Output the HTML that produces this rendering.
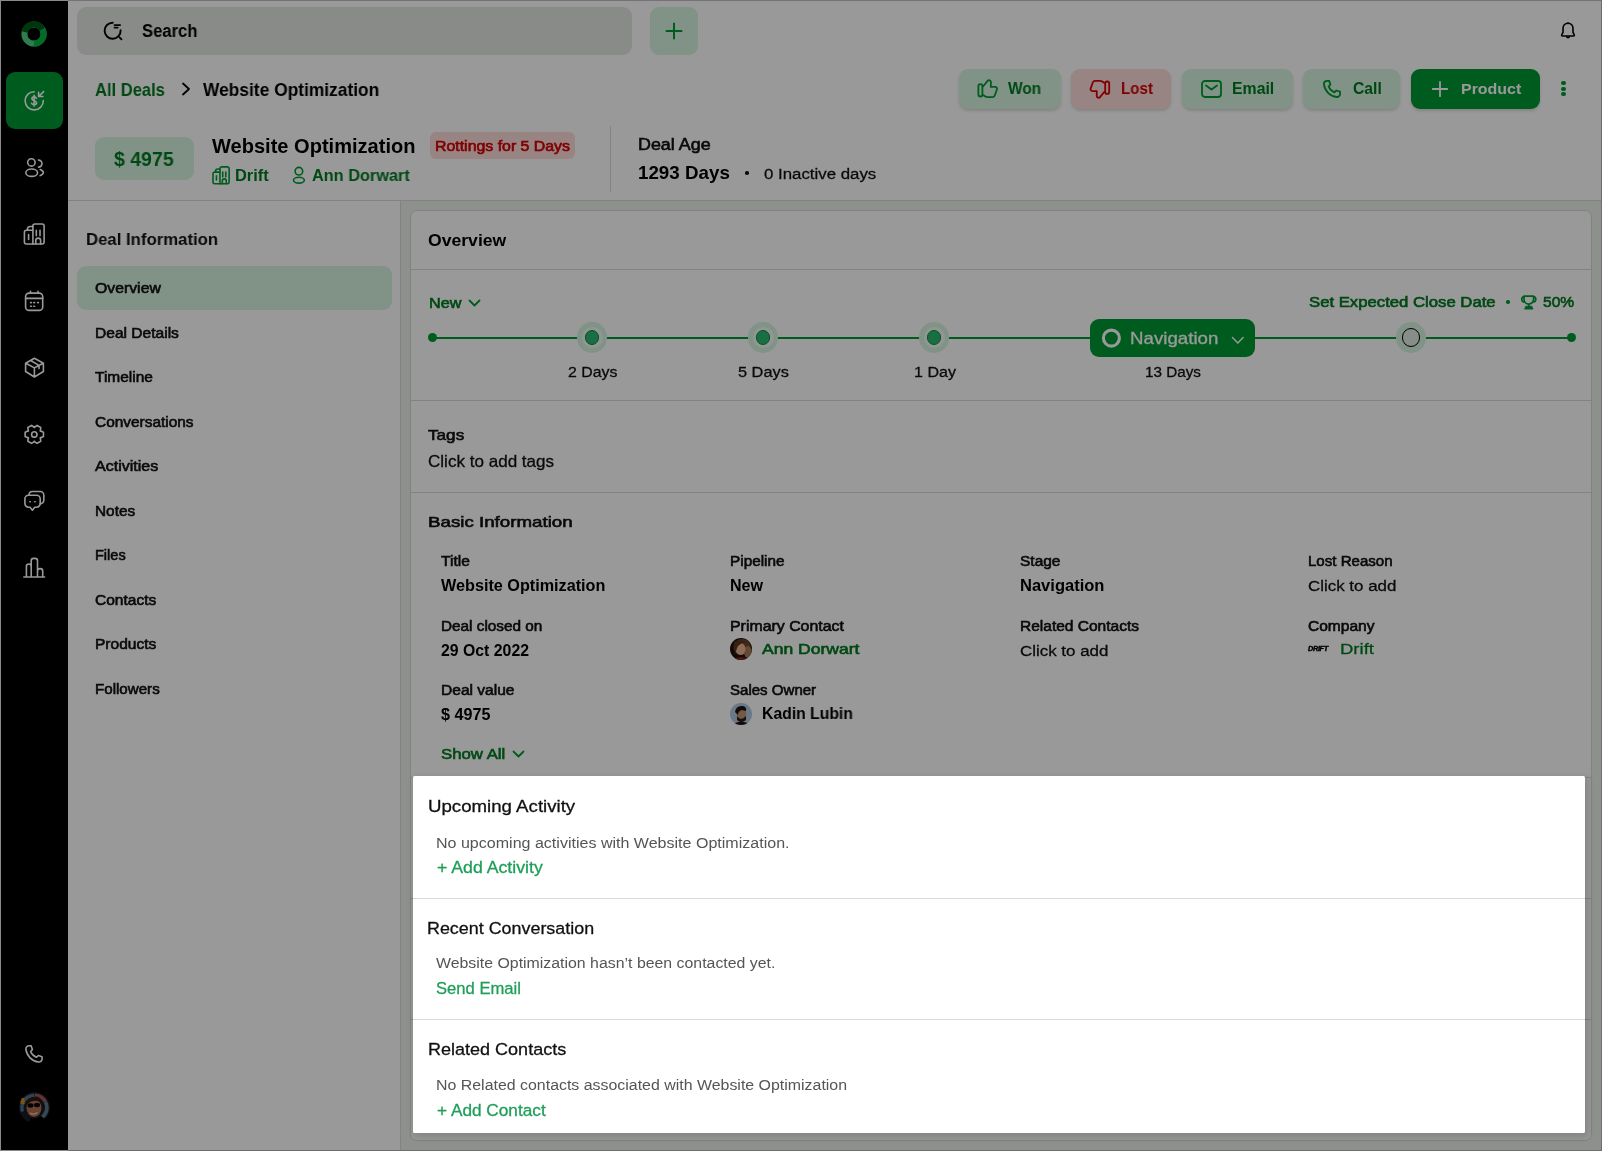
<!DOCTYPE html><html><head><meta charset="utf-8"><style>
*{margin:0;padding:0;box-sizing:border-box}
html,body{width:1602px;height:1151px;overflow:hidden}
body{position:relative;background:#edf0ed;font-family:"Liberation Sans",sans-serif}
.t{position:absolute;white-space:nowrap;line-height:1;transform-origin:0 0;will-change:transform}
.b{position:absolute}
svg{position:absolute;overflow:visible}
</style></head><body><div class="b" style="left:0;top:0;width:68px;height:1151px;background:#000"></div>
<div class="b" style="left:68px;top:0;width:1534px;height:201px;background:#fff;border-bottom:1px solid #d9d9d9"></div>
<div class="b" style="left:68px;top:201px;width:333px;height:950px;background:#fff;border-right:1px solid #d9d9d9"></div>
<div class="b" style="left:410px;top:210px;width:1182px;height:931px;background:#fff;border:1px solid #d9d9d9;border-radius:7px"></div>
<div class="b" style="left:411px;top:269px;width:1180px;height:1px;background:#d9d9d9"></div>
<div class="b" style="left:411px;top:400px;width:1180px;height:1px;background:#d9d9d9"></div>
<div class="b" style="left:411px;top:492px;width:1180px;height:1px;background:#d9d9d9"></div>
<div class="b" style="left:411px;top:898px;width:1180px;height:1px;background:#d9d9d9"></div>
<div class="b" style="left:411px;top:1019px;width:1180px;height:1px;background:#d9d9d9"></div>
<svg style="left:21px;top:21px;" width="26" height="26" viewBox="0 0 26 26"><circle cx="13" cy="13" r="9.6" fill="none" stroke="#4bd085" stroke-width="6"/><path d="M21.3 8.2 A9.6 9.6 0 0 1 13 22.6" fill="none" stroke="#00b843" stroke-width="6"/><path d="M3.6 11 A9.6 9.6 0 0 1 21.3 8.2" fill="none" stroke="#005a14" stroke-width="6"/></svg>
<div class="b" style="left:6px;top:72px;width:57px;height:57px;background:#009a32;border-radius:9px"></div>
<svg style="left:0;top:0" width="68" height="1151" viewBox="0 0 68 1151"><path d="M34.2 91.7 A9.1 9.1 0 1 0 43.3 100.6" fill="none" stroke="#fff" stroke-width="1.6" stroke-linecap="round" stroke-linejoin="round"/><path d="M43.6 91.6 L38.9 96.3 M38.6 92.4 V96.5 H42.9" fill="none" stroke="#fff" stroke-width="1.6" stroke-linecap="round" stroke-linejoin="round"/><path d="M36.4 98.3 C36 97.4 35.2 96.9 34.1 96.9 C32.8 96.9 31.9 97.6 31.9 98.7 C31.9 101.2 36.6 100.1 36.6 102.8 C36.6 104 35.6 104.7 34.1 104.7 C33 104.7 32.1 104.2 31.6 103.3 M34.1 95.4 V106.1" fill="none" stroke="#fff" stroke-width="1.6" stroke-linecap="round" stroke-linejoin="round"/><circle cx="31.4" cy="162.4" r="3.7" fill="none" stroke="#fff" stroke-width="1.6" stroke-linecap="round" stroke-linejoin="round"/><ellipse cx="31.7" cy="172.7" rx="5.9" ry="3.7" fill="none" stroke="#fff" stroke-width="1.6" stroke-linecap="round" stroke-linejoin="round"/><path d="M38.5 160.1 A3.5 3.5 0 0 1 38.5 167.1 M40.2 169.5 Q43.4 170.8 43.4 172.6 Q43.4 174.4 40.2 175.6" fill="none" stroke="#fff" stroke-width="1.6" stroke-linecap="round" stroke-linejoin="round"/><path d="M32.9 244 H26.4 A2 2 0 0 1 24.4 242 V232.2 A2 2 0 0 1 26.4 230.2 H32.9 M27.4 230.2 V229.5 A3 3 0 0 1 30.4 226.5 H32.9" fill="none" stroke="#fff" stroke-width="1.6" stroke-linecap="round" stroke-linejoin="round"/><path d="M32.9 244 V226 A2 2 0 0 1 34.9 224 H42.1 A2 2 0 0 1 44.1 226 V242 A2 2 0 0 1 42.1 244 Z" fill="none" stroke="#fff" stroke-width="1.6" stroke-linecap="round" stroke-linejoin="round"/><path d="M36.3 230.2 V235.8 M40 230.2 V235.8 M28.6 234.5 V239.4 M35.8 244 V240.5 A2.4 2.4 0 0 1 40.6 240.5 V244" fill="none" stroke="#fff" stroke-width="1.6" stroke-linecap="round" stroke-linejoin="round"/><rect x="25.6" y="293.1" width="17.1" height="17.3" rx="3.5" fill="none" stroke="#fff" stroke-width="1.6" stroke-linecap="round" stroke-linejoin="round"/><path d="M25.6 298.4 H42.7 M30.5 291.2 V293.2 M38 291.2 V293.2" fill="none" stroke="#fff" stroke-width="1.6" stroke-linecap="round" stroke-linejoin="round"/><path d="M30.6 302.6 h.8 M33.8 302.6 h.8 M37.6 302.6 h.8 M30.6 306.2 h.8 M33.8 306.2 h.8" fill="none" stroke="#fff" stroke-width="1.6" stroke-linecap="round" stroke-linejoin="round" stroke-width="1.9"/><path d="M34.4 358.2 L43.4 363.2 V371.5 L34.4 377 L25.6 371.5 V363.2 Z M25.8 363.3 L34.4 367.9 L43.2 363.3 M34.4 367.9 V377 M30.6 360.5 L39 365.4 V368.6" fill="none" stroke="#fff" stroke-width="1.6" stroke-linecap="round" stroke-linejoin="round"/><path d="M40.15 438.06 L43.46 436.51 L43.46 432.29 L40.15 430.74 L40.39 431.16 L40.71 427.53 L37.05 425.41 L34.06 427.50 L34.54 427.50 L31.55 425.41 L27.89 427.53 L28.21 431.16 L28.45 430.74 L25.14 432.29 L25.14 436.51 L28.45 438.06 L28.21 437.64 L27.89 441.27 L31.55 443.39 L34.54 441.30 L34.06 441.30 L37.05 443.39 L40.71 441.27 L40.39 437.64 Z" fill="none" stroke="#fff" stroke-width="1.6" stroke-linecap="round" stroke-linejoin="round"/><circle cx="34.3" cy="434.4" r="2.7" fill="none" stroke="#fff" stroke-width="1.6" stroke-linecap="round" stroke-linejoin="round"/><path d="M28.5 495.3 H36.6 A3.6 3.6 0 0 1 40.2 498.9 V503.6 A3.6 3.6 0 0 1 36.6 507.2 H34.8 L32.4 510.2 L30 507.2 H28.5 A3.6 3.6 0 0 1 24.9 503.6 V498.9 A3.6 3.6 0 0 1 28.5 495.3 Z" fill="none" stroke="#fff" stroke-width="1.6" stroke-linecap="round" stroke-linejoin="round"/><path d="M29 495.2 A3.6 3.6 0 0 1 32.4 491.5 H40.2 A3.6 3.6 0 0 1 43.8 495.1 V500.2 A3.6 3.6 0 0 1 40.2 503.8" fill="none" stroke="#fff" stroke-width="1.6" stroke-linecap="round" stroke-linejoin="round"/><path d="M29.9 501.8 h.4 M34.7 501.8 h.4" fill="none" stroke="#fff" stroke-width="1.6" stroke-linecap="round" stroke-linejoin="round" stroke-width="2"/><path d="M23.8 577 H44.6 M26.4 577 V566.4 A2.4 2.4 0 0 1 28.8 564 A2.4 2.4 0 0 1 31.2 566.4 V577 M31.2 577 V560.8 A2.4 2.4 0 0 1 33.6 558.4 H35.1 A2.4 2.4 0 0 1 37.5 560.8 V577 M37.5 577 V571 A2.4 2.4 0 0 1 39.9 568.6 H40.3 A2.4 2.4 0 0 1 42.7 571 V577" fill="none" stroke="#fff" stroke-width="1.6" stroke-linecap="round" stroke-linejoin="round"/><path d="M29.2 1045.8 L31.2 1045.9 L32.4 1049.6 L30.6 1051.5 C31.6 1054 33.8 1056.2 36.4 1057.3 L38.3 1055.5 L42 1056.7 L42.1 1058.7 C42.2 1060.5 40.6 1062.2 38.7 1062 C32 1061.3 26.6 1055.9 25.9 1049.2 C25.7 1047.3 27.3 1045.7 29.2 1045.8 Z" fill="none" stroke="#fff" stroke-width="1.6" stroke-linecap="round" stroke-linejoin="round"/></svg>
<svg style="left:19px;top:1092px;" width="31" height="31" viewBox="0 0 31 31"><defs><clipPath id="cc"><circle cx="15.5" cy="15.5" r="15.5"/></clipPath></defs><g clip-path="url(#cc)"><rect width="31" height="31" fill="#1a1c22"/><path d="M2 20 A14 14 0 0 1 15 1.5 L16 5 A11 11 0 0 0 5 19 Z" fill="#4d6f8c"/><path d="M16 1.5 A14 14 0 0 1 28 9 L25 11 A11 11 0 0 0 16 5 Z" fill="#9a5a58"/><path d="M28 9 A14 14 0 0 1 24 27 L22 24 A11 11 0 0 0 25 11 Z" fill="#5c7890"/><rect x="1.5" y="6" width="4" height="6" fill="#d08a20"/><ellipse cx="15" cy="16" rx="7.5" ry="9" fill="#b06e50"/><path d="M7 11 Q10 4 18 4.5 Q23 6 23 11 L19 9 Q12 8 8 13 Z" fill="#2e1a10"/><ellipse cx="11.5" cy="13.5" rx="3" ry="2.2" fill="#050505"/><ellipse cx="18" cy="13" rx="3" ry="2.2" fill="#050505"/><path d="M11 21 Q15 23.5 18.5 20.5" stroke="#e8d0c0" stroke-width="1.3" fill="none"/><path d="M9 31 L12 26 Q17 28 22 24 L31 31 Z" fill="#000"/></g></svg>
<div class="b" style="left:77px;top:7px;width:555px;height:48px;background:#e4e8e4;border-radius:9px"></div>
<svg style="left:0;top:0" width="200" height="60" viewBox="0 0 200 60"><path d="M112.7 22.7 A8 8 0 1 0 120.6 30.3 M114.6 25.1 H120.1 M114.6 27.6 H117.6 M119.5 37.3 L121.5 39.3" fill="none" stroke="#000" stroke-width="1.9" stroke-linecap="round"/></svg>
<div class="t" style="left:141.70px;top:23.44px;font-size:17.44px;font-weight:700;color:#000;transform:scaleX(0.9540);">Search</div>
<div class="b" style="left:650px;top:7px;width:48px;height:48px;background:#d5f5e0;border-radius:9px"></div>
<svg style="left:666px;top:23px;" width="16" height="16" viewBox="0 0 16 16"><path d="M8 0.5 V15.5 M0.5 8 H15.5" fill="none" stroke="#009a32" stroke-width="2" stroke-linecap="round"/></svg>
<svg style="left:1558px;top:21px;" width="20" height="20" viewBox="0 0 20 20"><path d="M10 2.2 C6.8 2.2 5 4.6 5 7.5 V11.3 L3.8 13.6 C3.3 14.3 3.8 15 4.6 15 H15.4 C16.2 15 16.7 14.3 16.2 13.6 L15 11.3 V7.5 C15 4.6 13.2 2.2 10 2.2 Z" fill="none" stroke="#000" stroke-width="1.6" stroke-linecap="round" stroke-linejoin="round" stroke-width="1.8"/><path d="M8 15.2 A2 2.2 0 0 0 12 15.2 Z" fill="#000"/><circle cx="10" cy="2.2" r="1" fill="#000"/></svg>
<div class="t" style="left:95.00px;top:80.80px;font-size:18.31px;font-weight:700;color:#00791f;transform:scaleX(0.9049);">All Deals</div>
<svg style="left:180px;top:82px;" width="12" height="14" viewBox="0 0 12 14"><path d="M3 1.5 L9 7 L3 12.5" fill="none" stroke="#000" stroke-width="1.8" stroke-linecap="round" stroke-linejoin="round"/></svg>
<div class="t" style="left:203.00px;top:80.80px;font-size:18.31px;font-weight:700;color:#000;transform:scaleX(0.9491);">Website Optimization</div>
<div class="b" style="left:959px;top:69px;width:102px;height:40px;background:#d5f5e0;border-radius:9px;box-shadow:0 2px 3px rgba(0,0,0,.14)"></div>
<div class="b" style="left:1071px;top:69px;width:100px;height:40px;background:#ffdcdc;border-radius:9px;box-shadow:0 2px 3px rgba(0,0,0,.14)"></div>
<div class="b" style="left:1182px;top:69px;width:111px;height:40px;background:#d5f5e0;border-radius:9px;box-shadow:0 2px 3px rgba(0,0,0,.14)"></div>
<div class="b" style="left:1303px;top:69px;width:97px;height:40px;background:#d5f5e0;border-radius:9px;box-shadow:0 2px 3px rgba(0,0,0,.14)"></div>
<div class="b" style="left:1411px;top:69px;width:129px;height:40px;background:#009a32;border-radius:9px;box-shadow:0 2px 3px rgba(0,0,0,.14)"></div>
<svg style="left:0;top:0" width="1602" height="200" viewBox="0 0 1602 200"><rect x="978.4" y="84.1" width="4" height="12.4" rx="2" fill="none" stroke="#009a32" stroke-width="1.8" stroke-linecap="round" stroke-linejoin="round"/><path d="M983.2 86.2 L987.6 80.9 C988.7 79.6 990.7 80.2 990.9 81.8 L990.8 86.9 H995.3 C996.5 86.9 997.3 88.1 997 89.3 L994.8 95.5 C994.4 96.6 993.4 97.2 992.3 97.2 H987.6 C986.2 97.2 985 96.6 983.4 95.3" fill="none" stroke="#009a32" stroke-width="1.8" stroke-linecap="round" stroke-linejoin="round"/><g transform="translate(1100 89) rotate(180) translate(-987.6 -89)"><rect x="978.4" y="84.1" width="4" height="12.4" rx="2" fill="none" stroke="#d40000" stroke-width="1.8" stroke-linecap="round" stroke-linejoin="round"/><path d="M983.2 86.2 L987.6 80.9 C988.7 79.6 990.7 80.2 990.9 81.8 L990.8 86.9 H995.3 C996.5 86.9 997.3 88.1 997 89.3 L994.8 95.5 C994.4 96.6 993.4 97.2 992.3 97.2 H987.6 C986.2 97.2 985 96.6 983.4 95.3" fill="none" stroke="#d40000" stroke-width="1.8" stroke-linecap="round" stroke-linejoin="round"/></g></svg>
<div class="t" style="left:1008.30px;top:81.21px;font-size:15.70px;font-weight:700;color:#00791f;transform:scaleX(0.9849);">Won</div>
<div class="t" style="left:1120.50px;top:81.21px;font-size:15.70px;font-weight:700;color:#d40000;transform:scaleX(0.9628);">Lost</div>
<svg style="left:1200.5px;top:80px;" width="21" height="18" viewBox="0 0 21 18"><rect x="1" y="1" width="19" height="16" rx="3" fill="none" stroke="#009a32" stroke-width="1.8" stroke-linecap="round" stroke-linejoin="round"/><path d="M5 5.5 L10.5 9.5 L16 5.5" fill="none" stroke="#009a32" stroke-width="1.8" stroke-linecap="round" stroke-linejoin="round"/></svg>
<div class="t" style="left:1231.70px;top:81.31px;font-size:15.70px;font-weight:700;color:#00791f;transform:scaleX(1.0100);">Email</div>
<svg style="left:1322px;top:79px;" width="20" height="20" viewBox="0 0 20 20"><path d="M5.2 1.8 L7.2 1.9 L8.4 5.6 L6.6 7.5 C7.6 10 9.8 12.2 12.4 13.3 L14.3 11.5 L18 12.7 L18.1 14.7 C18.2 16.5 16.6 18.2 14.7 18 C8 17.3 2.6 11.9 1.9 5.2 C1.7 3.3 3.3 1.7 5.2 1.8 Z" fill="none" stroke="#009a32" stroke-width="1.8" stroke-linecap="round" stroke-linejoin="round"/></svg>
<div class="t" style="left:1352.60px;top:81.31px;font-size:15.70px;font-weight:700;color:#00791f;transform:scaleX(0.9969);">Call</div>
<svg style="left:1432px;top:81px;" width="16" height="16" viewBox="0 0 16 16"><path d="M8 0.8 V15.2 M0.8 8 H15.2" fill="none" stroke="#fff" stroke-width="1.8" stroke-linecap="round"/></svg>
<div class="t" style="left:1460.70px;top:81.43px;font-size:15.55px;font-weight:700;color:#fff;transform:scaleX(1.0264);">Product</div>
<div class="b" style="left:1561.4px;top:81.0px;width:4.2px;height:4.2px;border-radius:50%;background:#009a32"></div>
<div class="b" style="left:1561.4px;top:86.60000000000001px;width:4.2px;height:4.2px;border-radius:50%;background:#009a32"></div>
<div class="b" style="left:1561.4px;top:92.2px;width:4.2px;height:4.2px;border-radius:50%;background:#009a32"></div>
<div class="b" style="left:95px;top:137px;width:99px;height:43px;background:#d5f5e0;border-radius:9px"></div>
<div class="t" style="left:113.70px;top:149.32px;font-size:20.06px;font-weight:700;color:#00791f;transform:scaleX(0.9732);">$ 4975</div>
<div class="t" style="left:212.20px;top:136.32px;font-size:20.06px;font-weight:700;color:#000;transform:scaleX(0.9983);">Website Optimization</div>
<div class="b" style="left:430px;top:132px;width:145px;height:27px;background:#ffdcdc;border-radius:6px"></div>
<div class="t" style="left:435.20px;top:139.51px;font-size:13.81px;font-weight:400;color:#d40000;transform:scaleX(1.1507);-webkit-text-stroke:0.6px #d40000;">Rottings for 5 Days</div>
<svg style="left:0;top:0" width="420" height="200" viewBox="0 0 420 200"><g transform="translate(212.9 166.9) scale(0.82 0.845) translate(-24.3 -224)" fill="none" stroke="#009a32" stroke-width="1.95" stroke-linecap="round" stroke-linejoin="round"><path d="M32.9 244 H26.4 A2 2 0 0 1 24.4 242 V232.2 A2 2 0 0 1 26.4 230.2 H32.9 M27.4 230.2 V229.5 A3 3 0 0 1 30.4 226.5 H32.9"/><path d="M32.9 244 V226 A2 2 0 0 1 34.9 224 H42.1 A2 2 0 0 1 44.1 226 V242 A2 2 0 0 1 42.1 244 Z"/><path d="M36.3 230.2 V235.8 M40 230.2 V235.8 M28.6 234.5 V239.4 M35.8 244 V240.5 A2.4 2.4 0 0 1 40.6 240.5 V244"/></g><circle cx="298.9" cy="171.2" r="3.8" fill="none" stroke="#009a32" stroke-width="1.6"/><ellipse cx="298.9" cy="180.2" rx="5.4" ry="2.9" fill="none" stroke="#009a32" stroke-width="1.6"/></svg>
<div class="t" style="left:235.20px;top:167.40px;font-size:16.42px;font-weight:700;color:#00791f;transform:scaleX(0.9954);">Drift</div>
<div class="t" style="left:312.40px;top:167.40px;font-size:16.42px;font-weight:700;color:#00791f;transform:scaleX(0.9935);">Ann Dorwart</div>
<div class="b" style="left:610px;top:126px;width:1px;height:66px;background:#d9d9d9"></div>
<div class="t" style="left:638.40px;top:136.87px;font-size:15.99px;font-weight:400;color:#111;transform:scaleX(1.1189);-webkit-text-stroke:0.6px #111;">Deal Age</div>
<div class="t" style="left:638.40px;top:164.20px;font-size:18.31px;font-weight:700;color:#000;transform:scaleX(1.0256);">1293 Days</div>
<div class="b" style="left:745px;top:171px;width:3.6px;height:3.6px;border-radius:50%;background:#111"></div>
<div class="t" style="left:763.80px;top:165.69px;font-size:15.44px;font-weight:400;color:#111;transform:scaleX(1.0898);-webkit-text-stroke:0.28px #111;">0 Inactive days</div>
<div class="t" style="left:86.00px;top:230.76px;font-size:17.30px;font-weight:700;color:#111;transform:scaleX(0.9688);">Deal Information</div>
<div class="b" style="left:77px;top:266px;width:315px;height:44px;background:#d5f5e0;border-radius:9px"></div>
<div class="t" style="left:94.70px;top:281.10px;font-size:14.53px;font-weight:400;color:#111;transform:scaleX(1.0880);-webkit-text-stroke:0.6px #111;">Overview</div>
<div class="t" style="left:94.70px;top:325.60px;font-size:14.53px;font-weight:400;color:#111;transform:scaleX(1.0720);-webkit-text-stroke:0.6px #111;">Deal Details</div>
<div class="t" style="left:94.70px;top:370.10px;font-size:14.53px;font-weight:400;color:#111;transform:scaleX(1.0665);-webkit-text-stroke:0.6px #111;">Timeline</div>
<div class="t" style="left:94.70px;top:414.60px;font-size:14.53px;font-weight:400;color:#111;transform:scaleX(1.0624);-webkit-text-stroke:0.6px #111;">Conversations</div>
<div class="t" style="left:94.70px;top:459.10px;font-size:14.53px;font-weight:400;color:#111;transform:scaleX(1.1039);-webkit-text-stroke:0.6px #111;">Activities</div>
<div class="t" style="left:94.70px;top:503.60px;font-size:14.53px;font-weight:400;color:#111;transform:scaleX(1.0588);-webkit-text-stroke:0.6px #111;">Notes</div>
<div class="t" style="left:94.70px;top:548.10px;font-size:14.53px;font-weight:400;color:#111;transform:scaleX(0.9939);-webkit-text-stroke:0.6px #111;">Files</div>
<div class="t" style="left:94.70px;top:592.60px;font-size:14.53px;font-weight:400;color:#111;transform:scaleX(1.0705);-webkit-text-stroke:0.6px #111;">Contacts</div>
<div class="t" style="left:94.70px;top:637.10px;font-size:14.53px;font-weight:400;color:#111;transform:scaleX(1.0705);-webkit-text-stroke:0.6px #111;">Products</div>
<div class="t" style="left:94.70px;top:681.60px;font-size:14.53px;font-weight:400;color:#111;transform:scaleX(1.0420);-webkit-text-stroke:0.6px #111;">Followers</div>
<div class="t" style="left:428.10px;top:231.98px;font-size:17.15px;font-weight:700;color:#000;transform:scaleX(1.0266);">Overview</div>
<div class="t" style="left:428.60px;top:295.77px;font-size:14.68px;font-weight:400;color:#00791f;transform:scaleX(1.1033);-webkit-text-stroke:0.6px #00791f;">New</div>
<svg style="left:468px;top:299px;" width="13" height="9" viewBox="0 0 13 9"><path d="M1.5 1.5 L6.5 6.5 L11.5 1.5" fill="none" stroke="#009a32" stroke-width="1.8" stroke-linecap="round" stroke-linejoin="round" stroke-width="1.6"/></svg>
<div class="t" style="left:1309.40px;top:295.45px;font-size:14.83px;font-weight:400;color:#00791f;transform:scaleX(1.1266);-webkit-text-stroke:0.6px #00791f;">Set Expected Close Date</div>
<div class="b" style="left:1506.4px;top:300.4px;width:3.6px;height:3.6px;border-radius:50%;background:#009a32"></div>
<svg style="left:0;top:0" width="1602" height="400" viewBox="0 0 1602 400"><g fill="none" stroke="#009a32" stroke-width="1.7" stroke-linecap="round" stroke-linejoin="round"><path d="M1524 296.2 H1533.6 V299.3 A4.8 4.8 0 0 1 1524 299.3 Z M1524 297 H1522.7 A1.5 2.3 0 0 0 1524.3 301.6 M1533.6 297 H1534.9 A1.5 2.3 0 0 1 1533.3 301.6 M1528.8 304.2 V306.4"/></g><path d="M1524.6 309.1 L1525.8 306.2 H1531.8 L1533 309.1 Z" fill="#009a32" stroke="#009a32" stroke-width="0.8" stroke-linejoin="round"/></svg>
<div class="t" style="left:1542.60px;top:295.45px;font-size:14.83px;font-weight:400;color:#00791f;transform:scaleX(1.0481);-webkit-text-stroke:0.6px #00791f;">50%</div>
<div class="b" style="left:432px;top:336.5px;width:1139px;height:2px;background:#009a32"></div>
<div class="b" style="left:427.5px;top:333px;width:9px;height:9px;border-radius:50%;background:#009a32"></div>
<div class="b" style="left:1566.5px;top:333px;width:9px;height:9px;border-radius:50%;background:#009a32"></div>
<div class="b" style="left:576.7px;top:322.2px;width:30.6px;height:30.6px;border-radius:50%;background:#d5f5e0"></div>
<div class="b" style="left:581.5px;top:327.0px;width:21px;height:21px;border-radius:50%;background:#f2faf4"></div>
<div class="b" style="left:584.7px;top:330.2px;width:14.6px;height:14.6px;border-radius:50%;background:#2cb872;border:1.2px solid #0a8a3a"></div>
<div class="b" style="left:747.7px;top:322.2px;width:30.6px;height:30.6px;border-radius:50%;background:#d5f5e0"></div>
<div class="b" style="left:752.5px;top:327.0px;width:21px;height:21px;border-radius:50%;background:#f2faf4"></div>
<div class="b" style="left:755.7px;top:330.2px;width:14.6px;height:14.6px;border-radius:50%;background:#2cb872;border:1.2px solid #0a8a3a"></div>
<div class="b" style="left:918.7px;top:322.2px;width:30.6px;height:30.6px;border-radius:50%;background:#d5f5e0"></div>
<div class="b" style="left:923.5px;top:327.0px;width:21px;height:21px;border-radius:50%;background:#f2faf4"></div>
<div class="b" style="left:926.7px;top:330.2px;width:14.6px;height:14.6px;border-radius:50%;background:#2cb872;border:1.2px solid #0a8a3a"></div>
<div class="b" style="left:1395.5px;top:322.2px;width:30.6px;height:30.6px;border-radius:50%;background:#d5f5e0"></div>
<div class="b" style="left:1401.5px;top:328.2px;width:18.6px;height:18.6px;border-radius:50%;background:#e2ece5;border:1.6px solid #000"></div>
<div class="b" style="left:1090px;top:319px;width:165px;height:37.5px;background:#009a32;border-radius:9px"></div>
<svg style="left:1101px;top:328px;" width="21" height="21" viewBox="0 0 21 21"><circle cx="10.4" cy="10.1" r="8.0" fill="none" stroke="#fff" stroke-width="3.1"/></svg>
<div class="t" style="left:1129.80px;top:330.66px;font-size:16.89px;font-weight:400;color:#fff;transform:scaleX(1.1078);-webkit-text-stroke:0.28px #fff;">Navigation</div>
<svg style="left:1231px;top:336px;" width="14" height="9" viewBox="0 0 14 9"><path d="M1.5 1.5 L6.8 7 L12.1 1.5" fill="none" stroke="#fff" stroke-width="1.5" stroke-linecap="round" stroke-linejoin="round"/></svg>
<div class="t" style="left:567.60px;top:364.53px;font-size:14.56px;font-weight:400;color:#111;transform:scaleX(1.0921);-webkit-text-stroke:0.28px #111;">2 Days</div>
<div class="t" style="left:737.50px;top:364.53px;font-size:14.56px;font-weight:400;color:#111;transform:scaleX(1.1230);-webkit-text-stroke:0.28px #111;">5 Days</div>
<div class="t" style="left:913.90px;top:364.53px;font-size:14.56px;font-weight:400;color:#111;transform:scaleX(1.1040);-webkit-text-stroke:0.28px #111;">1 Day</div>
<div class="t" style="left:1145.00px;top:364.53px;font-size:14.56px;font-weight:400;color:#111;transform:scaleX(1.0482);-webkit-text-stroke:0.28px #111;">13 Days</div>
<div class="t" style="left:428.00px;top:427.26px;font-size:15.41px;font-weight:400;color:#111;transform:scaleX(1.1124);-webkit-text-stroke:0.6px #111;">Tags</div>
<div class="t" style="left:428.00px;top:453.46px;font-size:16.31px;font-weight:400;color:#111;transform:scaleX(1.0468);-webkit-text-stroke:0.28px #111;">Click to add tags</div>
<div class="t" style="left:428.40px;top:514.03px;font-size:15.55px;font-weight:400;color:#111;transform:scaleX(1.2044);-webkit-text-stroke:0.6px #111;">Basic Information</div>
<div class="t" style="left:441.40px;top:554.02px;font-size:14.39px;font-weight:400;color:#111;transform:scaleX(1.0844);-webkit-text-stroke:0.6px #111;">Title</div>
<div class="t" style="left:441.40px;top:578.09px;font-size:15.84px;font-weight:700;color:#000;transform:scaleX(1.0231);">Website Optimization</div>
<div class="t" style="left:730.40px;top:554.02px;font-size:14.39px;font-weight:400;color:#111;transform:scaleX(1.0665);-webkit-text-stroke:0.6px #111;">Pipeline</div>
<div class="t" style="left:730.40px;top:578.09px;font-size:15.84px;font-weight:700;color:#000;transform:scaleX(1.0161);">New</div>
<div class="t" style="left:1019.50px;top:554.02px;font-size:14.39px;font-weight:400;color:#111;transform:scaleX(1.0771);-webkit-text-stroke:0.6px #111;">Stage</div>
<div class="t" style="left:1019.50px;top:578.09px;font-size:15.84px;font-weight:700;color:#000;transform:scaleX(1.0435);">Navigation</div>
<div class="t" style="left:1307.90px;top:554.02px;font-size:14.39px;font-weight:400;color:#111;transform:scaleX(1.0472);-webkit-text-stroke:0.6px #111;">Lost Reason</div>
<div class="t" style="left:1307.90px;top:578.29px;font-size:15.44px;font-weight:400;color:#111;transform:scaleX(1.0962);-webkit-text-stroke:0.28px #111;">Click to add</div>
<div class="t" style="left:441.40px;top:618.62px;font-size:14.39px;font-weight:400;color:#111;transform:scaleX(1.0653);-webkit-text-stroke:0.6px #111;">Deal closed on</div>
<div class="t" style="left:441.40px;top:642.79px;font-size:15.84px;font-weight:700;color:#000;transform:scaleX(0.9992);">29 Oct 2022</div>
<div class="t" style="left:730.40px;top:618.62px;font-size:14.39px;font-weight:400;color:#111;transform:scaleX(1.1052);-webkit-text-stroke:0.6px #111;">Primary Contact</div>
<div class="t" style="left:761.60px;top:642.23px;font-size:14.97px;font-weight:400;color:#00791f;transform:scaleX(1.1707);-webkit-text-stroke:0.6px #00791f;">Ann Dorwart</div>
<div class="t" style="left:1019.50px;top:618.62px;font-size:14.39px;font-weight:400;color:#111;transform:scaleX(1.0791);-webkit-text-stroke:0.6px #111;">Related Contacts</div>
<div class="t" style="left:1019.50px;top:643.49px;font-size:15.44px;font-weight:400;color:#111;transform:scaleX(1.0962);-webkit-text-stroke:0.28px #111;">Click to add</div>
<div class="t" style="left:1307.90px;top:618.62px;font-size:14.39px;font-weight:400;color:#111;transform:scaleX(1.0815);-webkit-text-stroke:0.6px #111;">Company</div>
<div class="t" style="left:1339.50px;top:641.49px;font-size:15.44px;font-weight:400;color:#00791f;transform:scaleX(1.1981);-webkit-text-stroke:0.28px #00791f;">Drift</div>
<div class="t" style="left:441.40px;top:682.82px;font-size:14.39px;font-weight:400;color:#111;transform:scaleX(1.0825);-webkit-text-stroke:0.6px #111;">Deal value</div>
<div class="t" style="left:441.40px;top:706.59px;font-size:15.84px;font-weight:700;color:#000;transform:scaleX(1.0196);">$ 4975</div>
<div class="t" style="left:730.40px;top:682.82px;font-size:14.39px;font-weight:400;color:#111;transform:scaleX(1.0465);-webkit-text-stroke:0.6px #111;">Sales Owner</div>
<div class="t" style="left:761.60px;top:705.99px;font-size:15.84px;font-weight:700;color:#000;transform:scaleX(0.9944);">Kadin Lubin</div>
<svg style="left:730px;top:637.5px;" width="22" height="22" viewBox="0 0 22 22"><defs><clipPath id="ca"><circle cx="11" cy="11" r="11"/></clipPath></defs><g clip-path="url(#ca)"><rect width="22" height="22" fill="#1e120c"/><ellipse cx="12" cy="9" rx="8.5" ry="8" fill="#6e4428"/><ellipse cx="18" cy="14" rx="4" ry="6" fill="#a87a56"/><ellipse cx="10.5" cy="11" rx="5" ry="6" fill="#e9b495"/><path d="M4 4 Q11 0 17 5 Q12 4 8 8 Q6 12 5 17 Z" fill="#5a3520"/><path d="M3 22 Q10 16 19 22 Z" fill="#7a2a1e"/></g></svg>
<svg style="left:730px;top:702.5px;" width="22" height="22" viewBox="0 0 22 22"><defs><clipPath id="cb"><circle cx="11" cy="11" r="11"/></clipPath></defs><g clip-path="url(#cb)"><rect width="22" height="22" fill="#b3c8e2"/><ellipse cx="11.5" cy="11" rx="4.8" ry="6" fill="#c49477"/><path d="M5 9 Q6 2 13 3 Q17 4 16 8 L12 7 Q8 8 8 12 Z" fill="#1a120e"/><path d="M7 13 Q11 19 16 13 L16 17 Q11 21 7 17 Z" fill="#2a1a14"/><path d="M2 22 Q11 15 21 22 Z" fill="#24100c"/></g></svg>
<div class="t" style="left:1307.8px;top:644.9px;font-size:7px;font-weight:700;font-style:italic;color:#000;transform:scaleX(1.04);letter-spacing:-0.3px;-webkit-text-stroke:0.4px #000">DRIFT</div>
<div class="t" style="left:441.00px;top:746.93px;font-size:14.97px;font-weight:400;color:#00791f;transform:scaleX(1.1198);-webkit-text-stroke:0.6px #00791f;">Show All</div>
<svg style="left:512px;top:750px;" width="13" height="9" viewBox="0 0 13 9"><path d="M1.5 1.5 L6.5 6.5 L11.5 1.5" fill="none" stroke="#009a32" stroke-width="1.8" stroke-linecap="round" stroke-linejoin="round" stroke-width="1.6"/></svg>
<div class="b" style="left:1585px;top:777px;width:6px;height:1px;background:#d9d9d9"></div>
<div class="b" style="left:411px;top:777px;width:2px;height:1px;background:#d9d9d9"></div>
<div class="t" style="left:428.00px;top:798.40px;font-size:16.02px;font-weight:400;color:#111;transform:scaleX(1.1646);-webkit-text-stroke:0.28px #111;">Upcoming Activity</div>
<div class="t" style="left:435.70px;top:836.59px;font-size:13.95px;font-weight:400;color:#555;transform:scaleX(1.1505);">No upcoming activities with Website Optimization.</div>
<div class="t" style="left:436.50px;top:860.47px;font-size:15.58px;font-weight:400;color:#1f9e58;transform:scaleX(1.1363);-webkit-text-stroke:0.28px #1f9e58;">+ Add Activity</div>
<div class="t" style="left:427.20px;top:919.90px;font-size:16.02px;font-weight:400;color:#111;transform:scaleX(1.1172);-webkit-text-stroke:0.28px #111;">Recent Conversation</div>
<div class="t" style="left:435.50px;top:957.49px;font-size:13.95px;font-weight:400;color:#555;transform:scaleX(1.1390);">Website Optimization hasn’t been contacted yet.</div>
<div class="t" style="left:436.30px;top:981.47px;font-size:15.58px;font-weight:400;color:#1f9e58;transform:scaleX(1.0668);-webkit-text-stroke:0.28px #1f9e58;">Send Email</div>
<div class="t" style="left:428.20px;top:1040.80px;font-size:16.02px;font-weight:400;color:#111;transform:scaleX(1.1248);-webkit-text-stroke:0.28px #111;">Related Contacts</div>
<div class="t" style="left:435.90px;top:1078.69px;font-size:13.95px;font-weight:400;color:#555;transform:scaleX(1.1419);">No Related contacts associated with Website Optimization</div>
<div class="t" style="left:436.70px;top:1102.67px;font-size:15.58px;font-weight:400;color:#1f9e58;transform:scaleX(1.1056);-webkit-text-stroke:0.28px #1f9e58;">+ Add Contact</div>
<div class="b" style="left:413px;top:776.3px;width:1171.8px;height:356.6px;box-shadow:2px 3px 7px 2px rgba(0,0,0,.13),0 0 3.5px 3000px rgba(0,0,0,.4);border-radius:1.5px"></div>
<div class="b" style="left:0;top:0;width:1px;height:1151px;background:#8a8a8a"></div>
<div class="b" style="left:0;top:0;width:68px;height:1px;background:#8a8a8a"></div>
<div class="b" style="left:68px;top:0;width:1534px;height:1px;background:#737373"></div>
<div class="b" style="left:0;top:1150px;width:68px;height:1px;background:#8a8a8a"></div>
<div class="b" style="left:68px;top:1150px;width:1534px;height:1px;background:#6e6e6e"></div>
<div class="b" style="left:1601px;top:0;width:1px;height:1151px;background:#6e6e6e"></div></body></html>
